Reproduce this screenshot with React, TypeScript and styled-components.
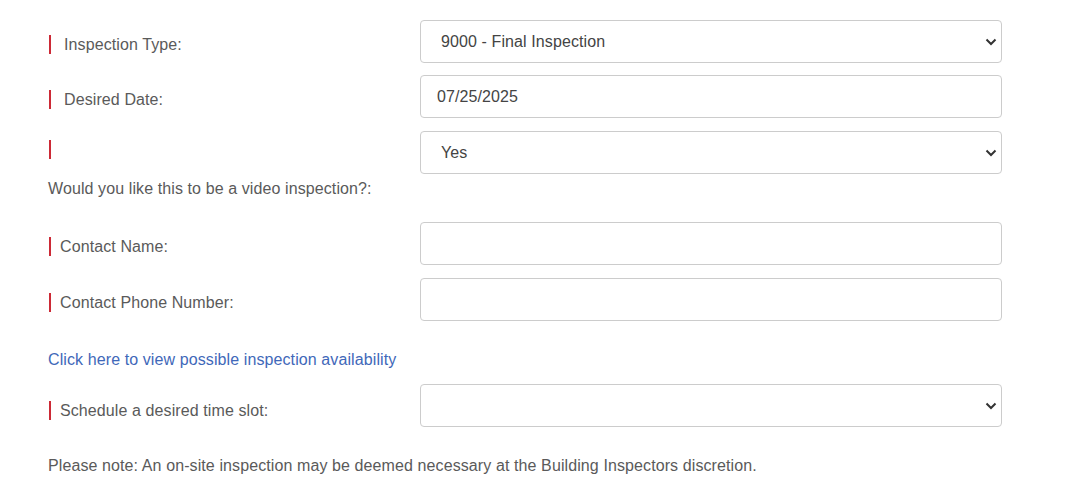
import styled, { createGlobalStyle } from "styled-components";

const GlobalStyle = createGlobalStyle`
  html, body {
    margin: 0;
    padding: 0;
    background: #ffffff;
  }
  body {
    font-family: "Liberation Sans", Arial, sans-serif;
    font-size: 16px;
    letter-spacing: 0.1px;
    color: #555555;
  }
`;

const Form = styled.div`
  padding: 20px 0 0 48px;
  width: 954px;
`;

const Row = styled.div<{ $mb?: number; $mt?: number }>`
  display: flex;
  align-items: flex-start;
  margin-top: ${({ $mt }) => ($mt ?? 0)}px;
  margin-bottom: ${({ $mb }) => ($mb ?? 0)}px;
`;

const LabelCol = styled.div`
  width: 372px;
  flex-shrink: 0;
`;

const Label = styled.label<{ $top?: number; $gap?: number }>`
  display: flex;
  align-items: center;
  height: 19px;
  margin-top: ${({ $top }) => ($top ?? 15)}px;
  color: #5a5a5a;
  line-height: 18px;

  &::before {
    content: "";
    display: block;
    width: 2px;
    height: 19px;
    margin-left: 1px;
    margin-right: ${({ $gap }) => ($gap ?? 9)}px;
    background: #cc2a36;
  }
`;

const Field = styled.div`
  position: relative;
  width: 582px;
`;

const TextInput = styled.input`
  box-sizing: border-box;
  width: 100%;
  height: 43px;
  padding: 0 16px;
  border: 1px solid #cccccc;
  border-radius: 4px;
  font-family: "Liberation Sans", Arial, sans-serif;
  font-size: 16px;
  letter-spacing: 0.1px;
  color: #444444;
  background: #ffffff;
  outline: none;
`;

const Select = styled.select`
  box-sizing: border-box;
  width: 100%;
  height: 43px;
  padding: 0 36px 0 20px;
  border: 1px solid #cccccc;
  border-radius: 4px;
  font-family: "Liberation Sans", Arial, sans-serif;
  font-size: 16px;
  letter-spacing: 0.1px;
  color: #444444;
  background: #ffffff;
  appearance: none;
  -webkit-appearance: none;
  outline: none;
`;

const Chevron = styled.svg`
  position: absolute;
  right: 5px;
  top: 18px;
  width: 12px;
  height: 8px;
  pointer-events: none;
`;

const Text = styled.div<{ $mt: number }>`
  margin-top: ${({ $mt }) => $mt}px;
  line-height: 18px;
  color: #5a5a5a;
`;

const Link = styled.a`
  display: block;
  line-height: 18px;
  color: #3f68b9;
  text-decoration: none;
  cursor: pointer;
`;

const LinkWrap = styled.div`
  margin: 30px 0 15px;
`;

function SelectBox({ value, options }: { value: string; options: string[] }) {
  return (
    <Field>
      <Select defaultValue={value}>
        {options.map((o) => (
          <option key={o} value={o}>
            {o}
          </option>
        ))}
      </Select>
      <Chevron viewBox="0 0 12 8">
        <path d="M1.5 1.5 L6 6 L10.5 1.5" fill="none" stroke="#333" strokeWidth="2" />
      </Chevron>
    </Field>
  );
}

export default function App() {
  return (
    <>
      <GlobalStyle />
      <Form>
        <Row $mb={12}>
          <LabelCol>
            <Label $gap={13}>Inspection Type:</Label>
          </LabelCol>
          <SelectBox
            value="9000 - Final Inspection"
            options={["9000 - Final Inspection", "1000 - Footing Inspection", "2000 - Framing Inspection"]}
          />
        </Row>
        <Row $mb={13}>
          <LabelCol>
            <Label $gap={13}>Desired Date:</Label>
          </LabelCol>
          <Field>
            <TextInput type="text" defaultValue="07/25/2025" />
          </Field>
        </Row>
        <Row>
          <LabelCol>
            <Label $top={9} />
          </LabelCol>
          <SelectBox value="Yes" options={["Yes", "No"]} />
        </Row>
        <Text $mt={6}>Would you like this to be a video inspection?:</Text>
        <Row $mt={24} $mb={13}>
          <LabelCol>
            <Label>Contact Name:</Label>
          </LabelCol>
          <Field>
            <TextInput type="text" />
          </Field>
        </Row>
        <Row>
          <LabelCol>
            <Label>Contact Phone Number:</Label>
          </LabelCol>
          <Field>
            <TextInput type="text" />
          </Field>
        </Row>
        <LinkWrap>
          <Link>Click here to view possible inspection availability</Link>
        </LinkWrap>
        <Row>
          <LabelCol>
            <Label $top={17}>Schedule a desired time slot:</Label>
          </LabelCol>
          <SelectBox value="" options={["", "8:00 AM - 12:00 PM", "12:00 PM - 4:00 PM"]} />
        </Row>
        <Text $mt={30}>
          Please note: An on-site inspection may be deemed necessary at the Building Inspectors discretion.
        </Text>
      </Form>
    </>
  );
}
